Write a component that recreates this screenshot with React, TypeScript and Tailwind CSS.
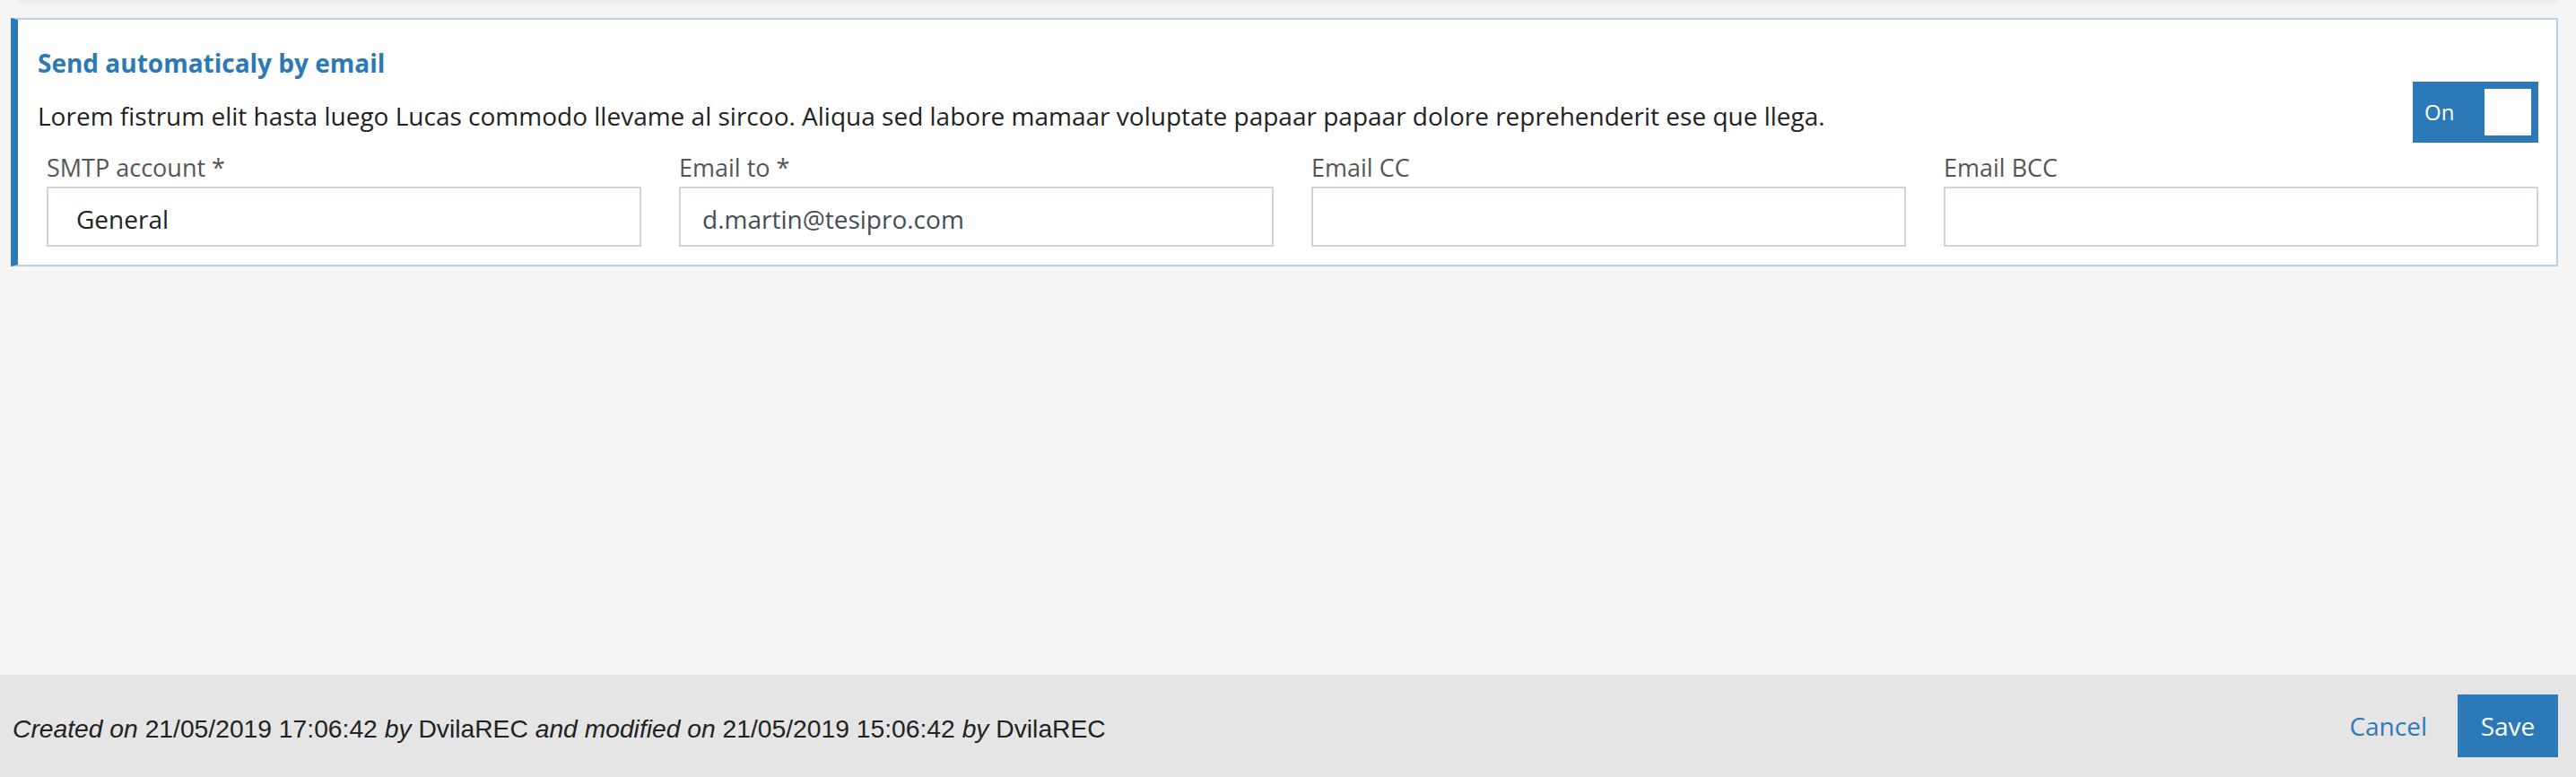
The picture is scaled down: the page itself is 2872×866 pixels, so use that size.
import React from "react";

const fields = [
  { label: "SMTP account *", value: "General", pad: "pl-[31px]", tone: "text-[#222]" },
  { label: "Email to *", value: "d.martin@tesipro.com", pad: "pl-[24px]", tone: "text-[#464c53]" },
  { label: "Email CC", value: "", pad: "pl-[24px]", tone: "text-[#464c53]" },
  { label: "Email BCC", value: "", pad: "pl-[24px]", tone: "text-[#464c53]" },
];

const Toggle = () => (
  <div className="mt-[39px] flex h-[68px] w-[140px] shrink-0 items-center justify-between bg-[#2b79b7] pl-[13px] pr-[8px]">
    <span className="text-[24px] leading-none text-white">On</span>
    <div className="h-[52px] w-[52px] bg-white" />
  </div>
);

export default function App() {
  return (
    <div className="flex h-[866px] w-[2872px] flex-col bg-[#f5f5f5] font-['Open_Sans',sans-serif]">
      <div className="mx-[20px] h-[1px] bg-[#ebebeb] shadow-[0_1px_4px_rgba(0,0,0,0.18)]" />

      <div className="flex-1 pt-[19px]">
        <div className="ml-[12px] mr-[20px] border-2 border-l-[8px] border-[#b7d1e8] border-l-[#2b79b7] bg-white">
          <div className="flex items-start justify-between pl-[22px] pr-[20px] pt-[30px]">
            <div>
              <h2 className="text-[28px] font-bold leading-[36px] text-[#2b79b7]">
                Send automaticaly by email
              </h2>
              <p className="mt-[23px] text-[28px] leading-[36px] text-[#222]">
                Lorem fistrum elit hasta luego Lucas commodo llevame al sircoo. Aliqua sed labore
                mamaar voluptate papaar papaar dolore reprehenderit ese que llega.
              </p>
            </div>
            <Toggle />
          </div>

          <div className="mt-[12px] grid grid-cols-4 gap-x-[42px] pb-[20px] pl-[32px] pr-[20px]">
            {fields.map((field) => (
              <div key={field.label}>
                <label className="block text-[27px] leading-[32px] text-[#555]">{field.label}</label>
                <div
                  className={`mt-[5px] flex h-[67px] items-center border-2 border-[#cfd4da] pt-1 text-[28px] ${field.pad} ${field.tone}`}
                >
                  {field.value}
                </div>
              </div>
            ))}
          </div>
        </div>
      </div>

      <footer className="flex h-[114px] items-center justify-between bg-[#e5e5e5] pl-[14px] pr-[20px]">
        <p className="pt-[6px] font-['Liberation_Sans',sans-serif] text-[28.25px] text-[#222]">
          <i>Created on</i> 21/05/2019 17:06:42 <i>by</i> DvilaREC <i>and modified on</i> 21/05/2019
          15:06:42 <i>by</i> DvilaREC
        </p>
        <div className="flex items-center gap-[34px]">
          <button className="text-[28px] text-[#2b79b7]">Cancel</button>
          <button className="h-[70px] w-[112px] bg-[#2b79b7] text-[28px] text-white">Save</button>
        </div>
      </footer>
    </div>
  );
}
